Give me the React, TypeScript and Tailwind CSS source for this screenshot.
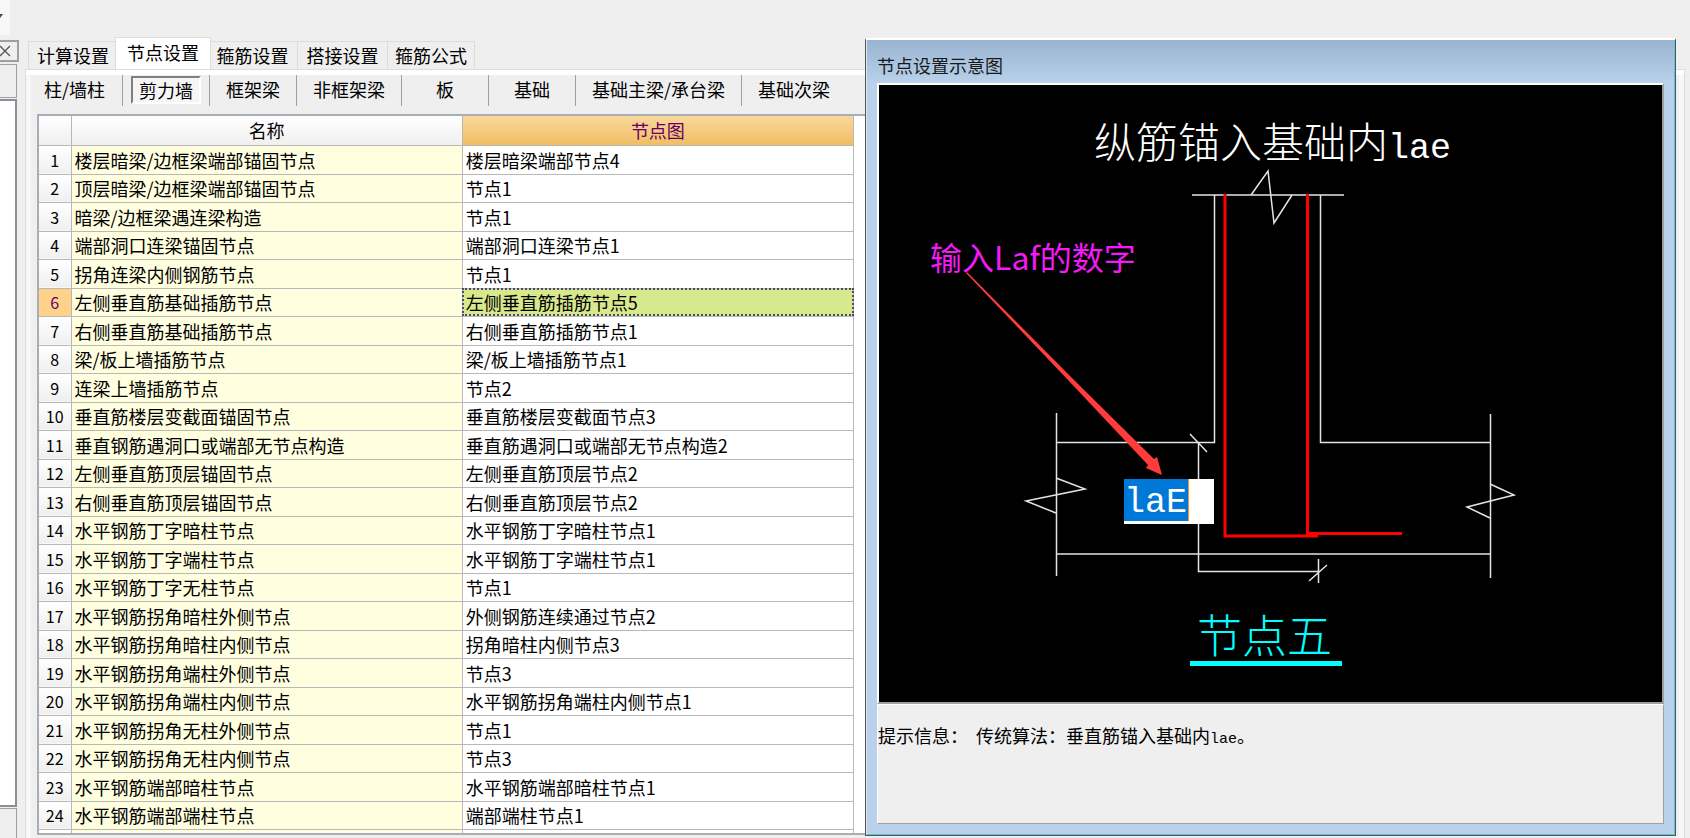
import React from "react";
import clsx from "clsx";

const tabs = ["计算设置", "节点设置", "箍筋设置", "搭接设置", "箍筋公式"];

const categories = [
  "柱/墙柱",
  "剪力墙",
  "框架梁",
  "非框架梁",
  "板",
  "基础",
  "基础主梁/承台梁",
  "基础次梁",
];

const rows = [
  ["楼层暗梁/边框梁端部锚固节点", "楼层暗梁端部节点4"],
  ["顶层暗梁/边框梁端部锚固节点", "节点1"],
  ["暗梁/边框梁遇连梁构造", "节点1"],
  ["端部洞口连梁锚固节点", "端部洞口连梁节点1"],
  ["拐角连梁内侧钢筋节点", "节点1"],
  ["左侧垂直筋基础插筋节点", "左侧垂直筋插筋节点5"],
  ["右侧垂直筋基础插筋节点", "右侧垂直筋插筋节点1"],
  ["梁/板上墙插筋节点", "梁/板上墙插筋节点1"],
  ["连梁上墙插筋节点", "节点2"],
  ["垂直筋楼层变截面锚固节点", "垂直筋楼层变截面节点3"],
  ["垂直钢筋遇洞口或端部无节点构造", "垂直筋遇洞口或端部无节点构造2"],
  ["左侧垂直筋顶层锚固节点", "左侧垂直筋顶层节点2"],
  ["右侧垂直筋顶层锚固节点", "右侧垂直筋顶层节点2"],
  ["水平钢筋丁字暗柱节点", "水平钢筋丁字暗柱节点1"],
  ["水平钢筋丁字端柱节点", "水平钢筋丁字端柱节点1"],
  ["水平钢筋丁字无柱节点", "节点1"],
  ["水平钢筋拐角暗柱外侧节点", "外侧钢筋连续通过节点2"],
  ["水平钢筋拐角暗柱内侧节点", "拐角暗柱内侧节点3"],
  ["水平钢筋拐角端柱外侧节点", "节点3"],
  ["水平钢筋拐角端柱内侧节点", "水平钢筋拐角端柱内侧节点1"],
  ["水平钢筋拐角无柱外侧节点", "节点1"],
  ["水平钢筋拐角无柱内侧节点", "节点3"],
  ["水平钢筋端部暗柱节点", "水平钢筋端部暗柱节点1"],
  ["水平钢筋端部端柱节点", "端部端柱节点1"],
];

const selectedRow = 5;

function DockPanel() {
  return (
    <aside className="flex w-[19px] shrink-0 flex-col">
      <div className="flex h-[35px] w-[10px] items-center bg-[#f8f8f8]">
        <svg width="3" height="4" viewBox="0 0 3 4" className="-mt-1">
          <path d="M0 0h3L0 4z" fill="#444" />
        </svg>
      </div>
      <button
        type="button"
        aria-label="关闭"
        className="mt-[5px] flex h-[22px] items-center border-y-2 border-r-2 border-[#a0a0a0]"
      >
        <svg width="11" height="12" viewBox="0 0 11 12">
          <path d="M0 1l10 10M10 1L0 11" stroke="#555" strokeWidth="1.3" />
        </svg>
      </button>
      <div className="mt-0.5 h-[34px] w-[17px] border-y border-r border-[#a0a0a0]" />
      <div className="mt-px w-[17px] flex-1 border-y-2 border-r-2 border-[#8a9097] bg-white" />
      <div className="mt-px h-[30px] w-[17px] border-t border-r border-[#a0a0a0]" />
    </aside>
  );
}

function SettingTabs() {
  return (
    <div role="tablist" className="ml-[3px] flex h-[31px] items-end">
      {tabs.map((tab, i) => {
        const active = i === 1;
        const last = i === tabs.length - 1;
        return (
          <button
            key={tab}
            type="button"
            role="tab"
            aria-selected={active}
            className={clsx(
              "shrink-0 whitespace-nowrap border-t border-[#dcdcdc]",
              active
                ? "z-10 -mx-[3px] h-[32px] w-24 border-x bg-white pb-1"
                : "h-[28px] border-r pb-0.5",
              !active && (last ? "w-[87px]" : "w-[90px]"),
              i === 0 && "border-l"
            )}
          >
            {tab}
          </button>
        );
      })}
    </div>
  );
}

function CategoryBar() {
  return (
    <div className="flex h-[31px] items-center">
      {categories.map((name, i) => (
        <div
          key={name}
          className={clsx(
            "flex h-[31px] shrink-0 items-start justify-center",
            i === 0 ? "w-[92px] pr-1" : "min-w-[87px]",
            i < categories.length - 1 && "border-r border-[#a0a0a0]"
          )}
        >
          {i === 1 ? (
            <button
              type="button"
              aria-pressed="true"
              className="mt-px h-[28px] w-[70px] border-2 border-t-[#808080] border-l-[#808080] border-r-white border-b-white bg-[#f5f5f5] leading-6"
            >
              {name}
            </button>
          ) : (
            <button type="button" className="h-[28px] whitespace-nowrap px-4">
              {name}
            </button>
          )}
        </div>
      ))}
    </div>
  );
}

function NodeTable() {
  return (
    <table className="w-[815px] table-fixed border-collapse">
      <thead>
        <tr className="h-[29px]">
          <th className="w-[32px] border-r border-b border-[#b8b8b8] bg-linear-to-b from-white to-[#efefef]" />
          <th className="border-r border-b border-[#b8b8b8] bg-linear-to-b from-white to-[#efefef] p-0 font-normal">
            名称
          </th>
          <th className="border-r border-b border-[#b8b8b8] bg-linear-to-b from-[#f8d79c] to-[#f0be60] p-0 font-normal text-[#660066]">
            节点图
          </th>
        </tr>
      </thead>
      <tbody>
        {rows.map(([name, node], i) => (
          <tr key={name} className="leading-6 odd:h-[29px] even:h-7">
            <th
              scope="row"
              className={clsx(
                "border-r border-b border-[#b8b8b8] p-0 text-center text-base font-normal",
                i === selectedRow
                  ? "bg-[#ffd28c] text-[#660066]"
                  : "bg-linear-to-b from-white to-[#efefef]"
              )}
            >
              {i + 1}
            </th>
            <td className="whitespace-nowrap border-r border-b border-[#b8b8b8] bg-[#ffffe0] py-0 pr-0 pl-[3px]">
              {name}
            </td>
            <td
              className={clsx(
                "whitespace-nowrap border-r border-b border-[#b8b8b8] py-0 pr-0 pl-[3px]",
                i === selectedRow &&
                  "bg-[#d8e88c] outline-2 -outline-offset-2 outline-dotted outline-[#4a4a6a]"
              )}
            >
              {node}
            </td>
          </tr>
        ))}
        <tr className="h-1">
          <td className="border-r border-[#b8b8b8] p-0" />
          <td className="border-r border-[#b8b8b8] bg-[#ffffe0] p-0" />
          <td className="border-r border-[#b8b8b8] p-0" />
        </tr>
      </tbody>
    </table>
  );
}

function NodeDrawing() {
  return (
    <div className="relative h-[616px] bg-black">
      <svg width="782" height="616" viewBox="0 0 782 616">
        {/* wall and foundation outline */}
        <g fill="none" stroke="#e4e4e4" strokeWidth="1.5">
          <path d="M312 109H464M334.500 109V356.500H176M440.500 109V356.500H610M176 468H610" />
          <path d="M176.500 327V490M610.500 328V492" />
          <path d="M371 109L388 85L394 137L412 109" />
          <path d="M176 392L205 403L146 415L176 427" />
          <path d="M610 398L634 409L587 421L610 432" />
          <path d="M318.500 356V485.500H438M438.500 473V497M429 495L447 479M310 348L327 366" />
        </g>
        {/* rebar */}
        <g fill="none" stroke="#ff0000" strokeWidth="3">
          <path d="M345 108V450H438" />
          <path d="M427.500 108V447.500H522" />
        </g>
        <path d="M310 577.500H462" stroke="#00ffff" strokeWidth="5" />
        <text x="214" y="72" fontSize="42" fill="#fff" className="font-light">
          纵筋锚入基础内
          <tspan fontSize="35" className="font-['Liberation_Mono',monospace]">
            lae
          </tspan>
        </text>
        <text x="317" y="567" fontSize="45" fill="#00ffff" className="font-light">
          节点五
        </text>
        <text x="50" y="184" fontSize="32" fill="#f31bf5">
          输入Laf的数字
        </text>
        <path
          d="M86 187L87 186L194 294L274 373L277 371L282 389L266 382L268 379L188 294Z"
          fill="#ff3b3b"
        />
      </svg>
      <div className="absolute top-[393px] left-[244px] h-[45px] w-[90px] bg-white">
        <input
          type="text"
          aria-label="锚固长度"
          defaultValue="laE"
          className="block h-[42px] w-[65px] border-r border-[#ff8a2a] bg-[#0078d7] px-0 pt-1.5 pb-0 font-['Liberation_Mono',monospace] text-[35px] text-white outline-none"
        />
      </div>
    </div>
  );
}

function DiagramWindow() {
  return (
    <section
      aria-labelledby="diagram-title"
      className="absolute top-[38px] right-[14px] bottom-[2px] left-[865px] flex flex-col border border-t-2 border-[#555] border-t-white bg-[#b9d1ea]"
    >
      <div className="flex flex-1 flex-col border-r border-b border-l border-r-[#4fc8e0] border-b-[#4fc8e0] border-l-[#dbe7f4]">
        <h2
          id="diagram-title"
          className="h-[43px] bg-linear-to-b from-[#99b4d1] to-[#b9d1ea] pt-[11px] pl-2.5 leading-7 text-[#1a1a1a]"
        >
          节点设置示意图
        </h2>
        <div className="mr-[10px] mb-[10px] ml-[10px] flex flex-1 flex-col">
          <div className="border-2 border-t-white border-r-[#a0a0a0] border-b-[#a0a0a0] border-l-white bg-black pt-px pl-px">
            <NodeDrawing />
          </div>
          <div className="flex flex-1 items-start gap-2 border border-t-white border-r-[#a0a0a0] border-b-[#a0a0a0] border-l-white bg-[#efefef] pt-4 leading-7">
            <span>提示信息：</span>
            <span>
              传统算法：垂直筋锚入基础内
              <span className="font-['Liberation_Mono',monospace] text-[15px]">lae</span>。
            </span>
          </div>
        </div>
      </div>
    </section>
  );
}

export default function App() {
  return (
    <main className="relative flex min-h-screen overflow-hidden bg-[#efefef] font-['Noto_Sans_CJK_SC',sans-serif] text-lg leading-6 text-black">
      <DockPanel />
      <div className="ml-[6px] mr-[5px] flex min-w-0 flex-1 flex-col pt-[38px]">
        <SettingTabs />
        <div className="flex flex-1 flex-col border-x border-t border-[#dcdcdc] bg-[#f7f7f7] px-[5px]">
          <div className="-mx-[5px] h-[5px] bg-white" />
          <div className="flex flex-1 flex-col bg-[#efefef]">
            <CategoryBar />
            <div className="mt-2 mr-3 ml-[6px] border-2 border-[#a9adb5] bg-white">
              <NodeTable />
            </div>
          </div>
        </div>
      </div>
      <DiagramWindow />
    </main>
  );
}
